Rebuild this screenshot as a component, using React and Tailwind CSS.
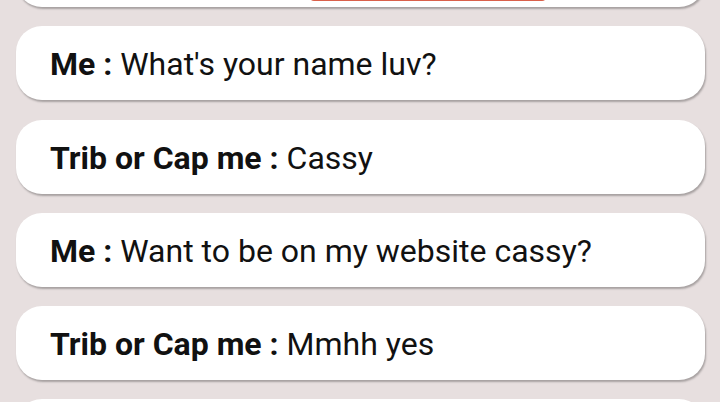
import React from "react"

const MESSAGES = [
  { who: "Me", text: "What's your name luv?" },
  { who: "Trib or Cap me", text: "Cassy" },
  { who: "Me", text: "Want to be on my website cassy?" },
  { who: "Trib or Cap me", text: "Mmhh yes" },
]

const Bubble = ({ children }) => (
  <div className="relative flex h-[74px] items-center rounded-[26px] bg-white pl-[34px] shadow-[1px_2px_2px_rgba(0,0,0,0.28)]">
    {children}
  </div>
)

export default function App() {
  return (
    <div
      className="h-[402px] w-[720px] overflow-hidden bg-[#e7dfdf]"
      style={{ fontFamily: "Roboto, 'Liberation Sans', sans-serif" }}
    >
      <div className="-mt-[67px] flex flex-col gap-[19.3px] pl-[16px] pr-[15px]">
        {/* previous bubble, only its bottom edge is on screen */}
        <Bubble>
          <div className="absolute bottom-[6px] left-[293px] h-[30px] w-[238px] rounded-[5px] bg-[#d9604a]" />
        </Bubble>
        {MESSAGES.map((m, i) => (
          <Bubble key={i}>
            <p className="pt-[2px] text-[32px] leading-none text-[#111]">
              <span className="font-bold">{m.who} :</span> {m.text}
            </p>
          </Bubble>
        ))}
        <Bubble />
      </div>
    </div>
  )
}
